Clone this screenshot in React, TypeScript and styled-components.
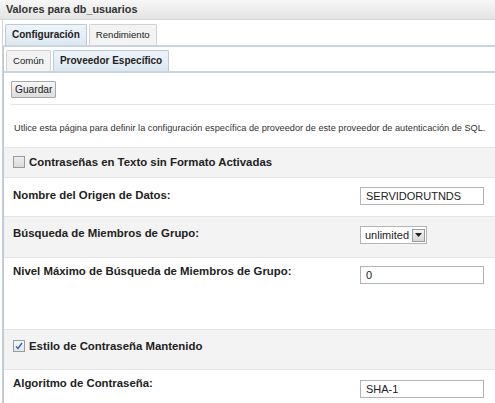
import React from "react";
import styled, { createGlobalStyle } from "styled-components";

const GlobalStyle = createGlobalStyle`
  body {
    margin: 0;
    background: #ffffff;
    font-family: "Liberation Sans", Arial, sans-serif;
    color: #222;
  }
`;

const Page = styled.div`
  width: 495px;
  height: 403px;
  overflow: hidden;
  background: #fff;
`;

const TitleBar = styled.div`
  height: 19px;
  line-height: 19px;
  padding-left: 6px;
  font-size: 10.8px;
  font-weight: bold;
  color: #333;
  background: linear-gradient(#f7f7f7, #e4e4e4);
  border-bottom: 1px solid #d6d6d6;
`;

const Frame = styled.div`
  margin-left: 2px;
  border-left: 1px solid #cfcfcf;
  height: 383px;
`;

const TabBar = styled.div<{ $top: number }>`
  display: flex;
  align-items: flex-end;
  gap: 2px;
  padding: ${(p) => p.$top}px 0 0 2px;
  border-bottom: 2px solid #c9d4df;
`;

const Tab = styled.div<{ $active?: boolean }>`
  height: 20px;
  line-height: 20px;
  padding: 0 6px;
  font-size: ${(p) => (p.$active ? "10px" : "9.6px")};
  font-weight: ${(p) => (p.$active ? "bold" : "normal")};
  color: #222;
  background: ${(p) => (p.$active ? "linear-gradient(#eef4fa, #dde8f2)" : "#f3f3f3")};
  border: 1px solid ${(p) => (p.$active ? "#b9cadb" : "#d2d2d2")};
  border-bottom: none;
  border-radius: 2px 2px 0 0;
`;

const SubPanel = styled.div`
  border-left: 1px solid #b9cadb;
`;

const Toolbar = styled.div`
  display: flex;
  margin: 0 0 0 7px;
  padding: 8px 0 6px 0;
  border-bottom: 1px solid #e2e2e2;
`;

const Button = styled.button`
  height: 17px;
  padding: 0 3px;
  font-family: "Liberation Sans", Arial, sans-serif;
  font-size: 10.2px;
  color: #222;
  background: linear-gradient(#f8f8f8, #dcdcdc);
  border: 1px solid #a8a8a8;
  border-radius: 1px;
`;

const Description = styled.div`
  padding: 18px 0 0 10px;
  height: 24px;
  font-size: 9.2px;
  white-space: nowrap;
  color: #333;
  border-bottom: 1px solid #e6e6e6;
`;

const Row = styled.div<{ $shaded?: boolean; $height: number; $pad: number }>`
  display: flex;
  justify-content: space-between;
  align-items: flex-start;
  box-sizing: border-box;
  height: ${(p) => p.$height}px;
  padding: ${(p) => p.$pad}px 10px 0 9px;
  background: ${(p) => (p.$shaded ? "#f3f3f3" : "#ffffff")};
  border-bottom: 1px solid #e4e4e4;
`;

const Label = styled.label<{ $offset?: number }>`
  display: flex;
  align-items: center;
  gap: 4px;
  margin-top: ${(p) => p.$offset ?? 0}px;
  font-size: 11.4px;
  font-weight: bold;
  color: #222;
`;

const Check = styled.span<{ $checked?: boolean }>`
  width: 10px;
  height: 10px;
  border: 1px solid #9a9a9a;
  background: ${(p) => (p.$checked ? "linear-gradient(#f4f8fc, #dfe8f2)" : "linear-gradient(#eee, #d9d9d9)")};
  display: inline-flex;
  align-items: center;
  justify-content: center;
`;

const Field = styled.div<{ $width?: number }>`
  box-sizing: border-box;
  width: ${(p) => p.$width ?? 124}px;
  height: 18px;
  line-height: 16px;
  padding: 0 5px;
  font-size: 11px;
  color: #222;
  border: 1px solid #b4b4b4;
  background: #fff;
`;

const Select = styled.div`
  display: flex;
  align-items: center;
  gap: 3px;
  height: 18px;
  box-sizing: border-box;
  padding: 0 1px 0 4px;
  font-size: 11px;
  color: #222;
  border: 1px solid #b4b4b4;
  background: #fff;
`;

const Arrow = styled.span`
  width: 13px;
  height: 13px;
  box-sizing: border-box;
  border: 1px solid #9a9a9a;
  background: linear-gradient(#f4f4f4, #d6d6d6);
  display: inline-flex;
  align-items: center;
  justify-content: center;
`;

const RightCol = styled.div`
  width: 125px;
  display: flex;
`;

export default function App() {
  return (
    <Page>
      <GlobalStyle />
      <TitleBar>Valores para db_usuarios</TitleBar>
      <Frame>
        <TabBar $top={4}>
          <Tab $active>Configuración</Tab>
          <Tab>Rendimiento</Tab>
        </TabBar>
        <SubPanel>
          <TabBar $top={3}>
            <Tab>Común</Tab>
            <Tab $active>Proveedor Específico</Tab>
          </TabBar>
          <Toolbar>
            <Button>Guardar</Button>
          </Toolbar>
          <Description>
            Utlice esta página para definir la configuración específica de proveedor de este proveedor de autenticación de SQL.
          </Description>
          <Row $shaded $height={30} $pad={8}>
            <Label>
              <Check />
              Contraseñas en Texto sin Formato Activadas
            </Label>
          </Row>
          <Row $height={39} $pad={9}>
            <Label $offset={2}>Nombre del Origen de Datos:</Label>
            <RightCol>
              <Field>SERVIDORUTNDS</Field>
            </RightCol>
          </Row>
          <Row $shaded $height={41} $pad={9}>
            <Label $offset={1}>Búsqueda de Miembros de Grupo:</Label>
            <RightCol>
              <Select>
                unlimited
                <Arrow>
                  <svg width="7" height="4" viewBox="0 0 7 4">
                    <path d="M0 0 L7 0 L3.5 4 Z" fill="#222" />
                  </svg>
                </Arrow>
              </Select>
            </RightCol>
          </Row>
          <Row $height={72} $pad={8}>
            <Label $offset={-1}>Nivel Máximo de Búsqueda de Miembros de Grupo:</Label>
            <RightCol>
              <Field>0</Field>
            </RightCol>
          </Row>
          <Row $shaded $height={40} $pad={10}>
            <Label>
              <Check $checked>
                <svg width="8" height="8" viewBox="0 0 8 8">
                  <path d="M1 4.5 L3 6.5 L7 1" stroke="#3a5f9a" strokeWidth="1.4" fill="none" />
                </svg>
              </Check>
              Estilo de Contraseña Mantenido
            </Label>
          </Row>
          <Row $height={40} $pad={10}>
            <Label $offset={-3}>Algoritmo de Contraseña:</Label>
            <RightCol>
              <Field>SHA-1</Field>
            </RightCol>
          </Row>
        </SubPanel>
      </Frame>
    </Page>
  );
}
